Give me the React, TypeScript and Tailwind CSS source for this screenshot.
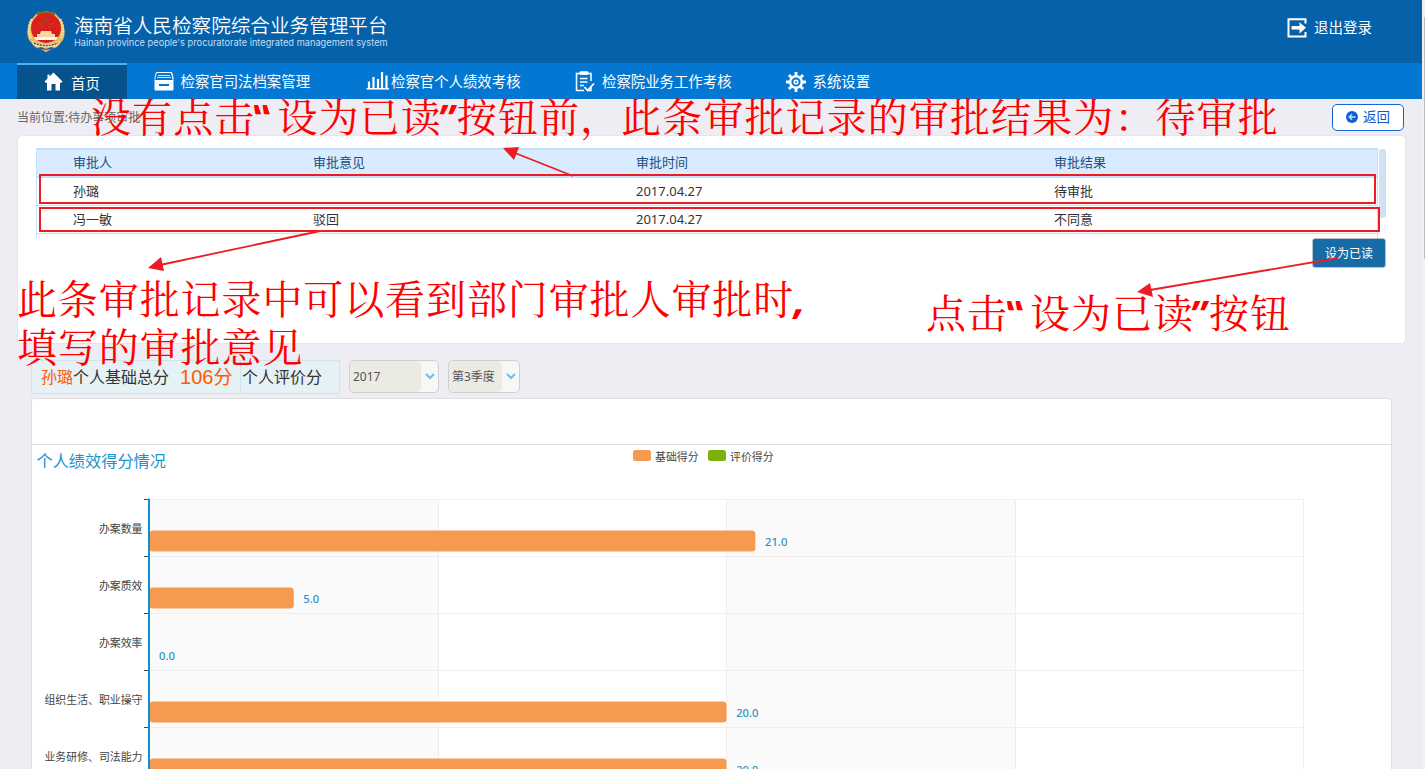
import type { ReactNode } from 'react';

const cols = 'grid grid-cols-[240px_323px_418px_1fr] pl-9 text-[13px] items-center';

const rows = [
  { name: '孙璐', opinion: '', time: '2017.04.27', result: '待审批' },
  { name: '冯一敏', opinion: '驳回', time: '2017.04.27', result: '不同意' },
];

const bars = [
  { label: '办案数量', value: 21 },
  { label: '办案质效', value: 5 },
  { label: '办案效率', value: 0 },
  { label: '组织生活、职业操守', value: 20 },
  { label: '业务研修、司法能力', value: 20 },
];

function Emblem() {
  return (
    <svg width="40" height="42" viewBox="0 0 40 42">
      <path d="M11 2Q20-1 29 2L36 10Q41 20 37 29L31 36 20 41 9 36 3 29Q-1 20 4 10Z" fill="#e8bd62" />
      <path d="M6 8Q1 17 5 27M34 8Q39 17 35 27M9 33l5 3M31 33l-5 3" stroke="#f7e3a4" strokeWidth="2.5" fill="none" strokeDasharray="2 1" />
      <path d="M10 2Q20-1 30 2L28 5Q20 2 12 5Z" fill="#7d6a22" />
      <circle cx="20" cy="17" r="15" fill="#d8211d" />
      <path d="M20 6l1 2.3 2.5.1-2 1.5.7 2.4-2.2-1.4-2.2 1.4.7-2.4-2-1.5 2.5-.1z" fill="#a4441c" />
      <path d="M13 13h2M25 13h2M16 16h1.5M22.500 16H24" stroke="#b5561c" strokeWidth="1.500" />
      <path d="M15 20h10l1 3h3v3H11v-3h3z" fill="#f6d8a8" />
      <path d="M8 26h24l-2 3H10z" fill="#fff4e4" />
      <path d="M6 30Q20 36 34 30L33 34Q20 39 7 34Z" fill="#f3dfa6" />
      <path d="M8 32Q20 37 32 32" stroke="#4a4a55" strokeWidth="1.500" strokeDasharray="2 1" fill="none" />
      <path d="M11 37l4-1 5 2 5-2 4 1-9 4z" fill="#38548a" />
      <path d="M15 38l5 3 5-3-5 1z" fill="#e9c56f" />
    </svg>
  );
}

function HomeIcon() {
  return (
    <svg width="19" height="19" viewBox="0 0 19 19" fill="#fff">
      <path d="M9.500.500L18.500 9.500 17.500 10.800H16v7.700h-4.500V12h-4v6.500H3V10.800H1.500L.500 9.500 3.500 6.500V2.500h2V4.500z" />
    </svg>
  );
}

function ArchiveIcon() {
  return (
    <svg width="20" height="19" viewBox="0 0 20 19">
      <path d="M2.500.500h15l1.500 7v-2L17.500.500h-15L1 5.500v2" fill="none" stroke="#fff" strokeWidth="1" />
      <path d="M4 3.500h12M3 5.500h14" stroke="#cfe6fb" strokeWidth="1" />
      <path d="M.5 8h19v9.500q0 1-1 1h-17q-1 0-1-1z" fill="#fff" />
      <path d="M5 13h10" stroke="#0477d3" strokeWidth="2" />
    </svg>
  );
}

function BarsIcon() {
  return (
    <svg width="24" height="18" viewBox="0 0 24 18" stroke="#fff" fill="none">
      <path d="M0.500 16.800h22.500" strokeWidth="1.500" />
      <path d="M3 17V9.500M7.500 17V5M12 17V7M16 17V0M20.500 17V3.500" strokeWidth="2.200" />
    </svg>
  );
}

function ClipboardIcon() {
  return (
    <svg width="20" height="21" viewBox="0 0 20 21" fill="none" stroke="#fff">
      <path d="M16 10V2.500H1.500v17H9M16 16v3.500h-3" strokeWidth="1.500" />
      <path d="M5 .800h8v2.500H5z" fill="#fff" strokeWidth="1" />
      <path d="M5 7.500h7.500M5 11h7.500M5 14.500h4" strokeWidth="1.500" />
      <path d="M9.500 16l3 3.500L19 12.500" strokeWidth="1.800" />
    </svg>
  );
}

function GearIcon() {
  return (
    <svg width="20" height="20" viewBox="0 0 20 20" fill="none" stroke="#fff">
      <circle cx="10" cy="10" r="5.800" strokeWidth="2.400" />
      <circle cx="10" cy="10" r="1.800" strokeWidth="1.600" />
      <path d="M10 0v4M10 16v4M0 10h4M16 10h4M2.900 2.900l2.600 2.600M14.500 14.500l2.600 2.600M17.100 2.900l-2.600 2.600M5.500 14.500l-2.600 2.600" strokeWidth="2.800" />
    </svg>
  );
}

function NavItem({ icon, iconBox, label }: { icon: ReactNode; iconBox: string; label: string }) {
  return (
    <a className="flex h-[37px] items-center whitespace-nowrap">
      <span className={iconBox}>{icon}</span>
      {label}
    </a>
  );
}

function Select({ value, box, field }: { value: string; box: string; field: string }) {
  return (
    <div className={`flex h-[33px] items-stretch rounded-[5px] border border-[#cfcfcf] bg-[#f7f7f7] text-xs text-[#555] ${box}`}>
      <span className={`flex items-center rounded-[5px] bg-[#ebebe4] pl-[3px] ${field}`}>{value}</span>
      <span className="flex flex-1 items-center justify-center">
        <svg width="10" height="7" viewBox="0 0 10 7" fill="none" stroke="#72bdf0" strokeWidth="2">
          <path d="M1 1l4 4 4-4" />
        </svg>
      </span>
    </div>
  );
}

function Chart() {
  const top = 54.5;
  const step = 57;
  return (
    <svg className="block" width="1359" height="340" viewBox="0 0 1359 340">
      <text x="4.500" y="21.500" fontSize="16.200" fill="#1b93cf">个人绩效得分情况</text>
      <rect x="601" y="5" width="18" height="11" rx="2.500" fill="#f69a50" />
      <text x="623" y="15.500" fontSize="10.900" fill="#444">基础得分</text>
      <rect x="676" y="5" width="18" height="11" rx="2.500" fill="#7cb10b" />
      <text x="698" y="15.500" fontSize="10.900" fill="#444">评价得分</text>
      <rect x="117" y={top} width="289" height="400" fill="#fafafa" />
      <rect x="694" y={top} width="289" height="400" fill="#fafafa" />
      <path d="M406.500 54.500V340M694.500 54.500V340M983.500 54.500V340M1271.500 54.500V340" stroke="#eee" />
      {bars.map((b, i) => (
        <path key={b.label} d={`M117 ${top + i * step}h1154`} stroke="#efefef" />
      ))}
      {bars.map((b, i) => (
        <g key={b.label}>
          <path d={`M112 ${top + i * step}h6`} stroke="#444" />
          <text x="110.500" y={top + i * step + 33} fontSize="10.900" fill="#444" textAnchor="end">{b.label}</text>
          {b.value > 0 && <rect x="117.500" y={top + i * step + 31} width={b.value * 28.850} height="21" rx="3.500" fill="#f69a50" />}
          <text x={127 + b.value * 28.860} y={top + i * step + 46.500} fontSize="11.200" fontWeight="500" fill="#2d92c5">{b.value.toFixed(1)}</text>
        </g>
      ))}
      <path d="M117 53.500V340" stroke="#0d8fd0" strokeWidth="2" />
    </svg>
  );
}

function Open() {
  return <span className="inline-block h-[40px] w-[22px] origin-top -translate-x-[10px] skew-x-[28deg] font-['Noto_Sans'] text-[38px] font-bold leading-[44px] tracking-normal">“</span>;
}

function Close() {
  return <span className="inline-block h-[40px] w-[15px] origin-top -skew-x-[8deg] font-['Noto_Sans'] text-[38px] font-bold leading-[44px] tracking-normal">”</span>;
}

export default function App() {
  return (
    <div className="relative flex h-[769px] w-[1425px] overflow-hidden bg-[#eeedf3] font-['Noto_Sans','Noto_Sans_CJK_SC',sans-serif]">
      <div className="flex w-[1422px] shrink-0 flex-col">
        <header className="flex h-[63px] shrink-0 items-center bg-[#0461aa] pl-[26px] pr-[50px] text-white">
          <Emblem />
          <div className="ml-2 flex flex-col pb-[3px]">
            <h1 className="whitespace-nowrap font-['Noto_Sans_CJK_SC',sans-serif] text-[19.6px] font-[350] leading-6">海南省人民检察院综合业务管理平台</h1>
            <p className="whitespace-nowrap font-['Inter',sans-serif] text-[9.25px] leading-[11px] text-[#c8dff2]">Hainan province people's procuratorate integrated management system</p>
          </div>
          <a className="ml-auto flex items-center gap-[7px] pb-2 text-[14.5px]">
            <svg width="20" height="20" viewBox="0 0 20 20" fill="none" stroke="#fff">
              <path d="M18.500 5.500V1.200h-17v17.300h17V14" strokeWidth="2" />
              <path d="M4.500 9.800h9" strokeWidth="3.500" />
              <path d="M12.500 4.200L19 9.800l-6.500 5.600z" fill="#fff" stroke="none" />
            </svg>
            退出登录
          </a>
        </header>

        <nav className="flex h-9 shrink-0 bg-[#0477d3] text-[14.4px] text-white">
          <a className="ml-[17px] flex w-[110px] items-center gap-[7px] border-t-2 border-[#46b4f5] bg-[#05528d] pl-7 pt-[2px]">
            <span className="-mt-[3px] -ml-px mr-px"><HomeIcon /></span>
            <span className="pt-px">首页</span>
          </a>
          <div className="ml-[27px] w-[212px]"><NavItem icon={<ArchiveIcon />} iconBox="w-[26.5px]" label="检察官司法档案管理" /></div>
          <div className="w-[209px]"><NavItem icon={<BarsIcon />} iconBox="w-[25px] pb-[2px]" label="检察官个人绩效考核" /></div>
          <div className="w-[211px]"><NavItem icon={<ClipboardIcon />} iconBox="w-[27px]" label="检察院业务工作考核" /></div>
          <div><NavItem icon={<GearIcon />} iconBox="w-[26.5px]" label="系统设置" /></div>
        </nav>

        <div className="flex h-9 shrink-0 items-center justify-between pl-[17px] pr-[18px]">
          <span className="pt-[2px] text-xs text-[#666]">当前位置:待办事项审批</span>
          <button className="flex h-[27px] w-[72px] items-center gap-[5px] rounded-[5px] border border-[#1565d8] bg-white pl-[13px] text-[13.500px] text-[#1059c8]">
            <svg width="12" height="12" viewBox="0 0 12 12">
              <circle cx="6" cy="6" r="6" fill="#0d5fd8" />
              <path d="M9.500 6H3.500M6 3.200L3.200 6 6 8.800" fill="none" stroke="#c9dcf8" strokeWidth="1.400" />
            </svg>
            返回
          </button>
        </div>

        <section className="ml-[17px] flex h-[209px] w-[1389px] shrink-0 flex-col rounded-[5px] border border-[#e6e6ea] bg-white px-[18px] pt-3">
          <div className="flex h-[90px] items-start">
            <div className="h-[90px] w-[1342px] border-x border-[#c5e0f8] text-[#333]">
              <div className={`${cols} h-[30px] border-y-2 border-[#c5e0f8] bg-[#d8ebff] text-[#1f4e7c]`}>
                <span>审批人</span>
                <span>审批意见</span>
                <span>审批时间</span>
                <span>审批结果</span>
              </div>
              {rows.map((r) => (
                <div key={r.name} className={`${cols} h-7 border-b border-[#c5e0f8]`}>
                  <span>{r.name}</span>
                  <span>{r.opinion}</span>
                  <span>{r.time}</span>
                  <span>{r.result}</span>
                </div>
              ))}
            </div>
            <div className="ml-px mt-px h-[69px] w-[7px] rounded-[3px] bg-[#cfe1f2]" />
          </div>
          <button className="mr-px h-[30px] w-[74px] self-end rounded-[3px] border border-[#b9c4ca] bg-[#186ca5] pt-[2px] text-xs text-white">设为已读</button>
        </section>

        <div className="ml-[31px] mt-4 flex h-[34px] shrink-0 items-start">
          <div className="flex h-[34px] w-[309px] items-stretch border border-[#cfe5ee] bg-[#e5f1f4] text-[#333]">
            <div className="flex w-[209px] items-center whitespace-nowrap border-r border-[#cfe1ee] pl-[9px] text-base">
              <span className="text-[#ff5a00]">孙璐</span>
              个人基础总分
              <span className="ml-[11px] font-['Liberation_Sans','Noto_Sans_CJK_SC',sans-serif] text-[20px] text-[#ff5a00]">106<span className="text-[19px]">分</span></span>
            </div>
            <div className="flex items-center pl-px text-base">个人评价分</div>
          </div>
          <Select value="2017" box="ml-[9px] w-[90px]" field="w-[71px]" />
          <Select value="第3季度" box="ml-[9px] w-[72px]" field="w-[53px]" />
        </div>

        <section className="ml-[31px] mt-1 flex h-[400px] w-[1361px] shrink-0 flex-col rounded-[3px] border border-[#dedede] bg-white">
          <div className="h-[46px] shrink-0 border-b border-[#e0e0e0]" />
          <Chart />
        </section>
      </div>
      <div className="flex w-[3px] flex-col bg-[#f1f1f3] pt-[17px]">
        <div className="ml-[2px] h-[242px] bg-[#bcbcbe]" />
      </div>

      <div className="absolute left-[39px] top-[174px] h-[30px] w-[1337px] border-2 border-[#ed1c24]" />
      <div className="absolute left-[39px] top-[207px] h-[25px] w-[1341px] border-2 border-[#ed1c24]" />
      <svg className="absolute left-0 top-0" width="1425" height="769" fill="#ed1c24" stroke="#ed1c24" strokeWidth="1.800">
        <path d="M573 176L515 153M320 231L160 265M1338 258L1150 290" />
        <path d="M503 148l16-1-5 13zM148 268l13-11 3 14zM1137 292l13-9 3 14z" stroke="none" />
      </svg>
      <div className="absolute left-[91px] top-[91px] whitespace-nowrap font-['Noto_Serif_CJK_SC','Noto_Sans_CJK_SC',serif] text-[40px] font-normal leading-[48px] tracking-[1.1px] text-[#ff0000]">
        没有点击<Open />设为已读<Close />按钮前，此条审批记录的审批结果为：待审批
      </div>
      <div className="absolute left-[17px] top-[273px] whitespace-nowrap font-['Noto_Serif_CJK_SC','Noto_Sans_CJK_SC',serif] text-[40px] font-normal leading-[48px] tracking-[0.9px] text-[#ff0000]">
        <div>此条审批记录中可以看到部门审批人审批时<span className="font-['Noto_Sans'] font-bold italic leading-none">,</span></div>
        <div>填写的审批意见</div>
      </div>
      <div className="absolute left-[926px] top-[287px] whitespace-nowrap font-['Noto_Serif_CJK_SC','Noto_Sans_CJK_SC',serif] text-[40px] font-normal leading-[48px] tracking-[1px] text-[#ff0000]">
        点击<Open />设为已读<Close />按钮
      </div>
    </div>
  );
}
